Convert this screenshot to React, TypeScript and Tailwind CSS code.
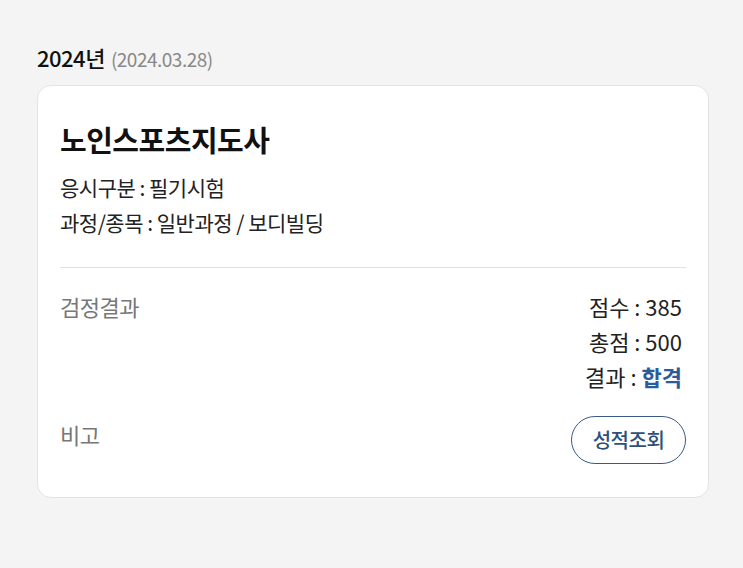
export default function App() {
  return (
    <div
      className="min-h-[568px] w-full bg-[#f4f4f4] px-[37px] pt-[42px]"
      style={{ fontFamily: '"Noto Sans CJK KR", "Noto Sans", sans-serif' }}
    >
      <div className="flex h-[30px] items-baseline gap-[6px] tracking-[-0.5px]">
        <span className="text-[22px] font-medium leading-[30px] text-[#111]">2024년</span>
        <span className="text-[19px] leading-[30px] text-[#888]">(2024.03.28)</span>
      </div>

      <div className="mt-[13px] w-[672px] rounded-[14px] border border-[#e3e3e3] bg-white px-[22px] pt-[33px] pb-[33px]">
        <h2 className="text-[29px] font-bold leading-[40px] text-[#111] tracking-[-0.5px]">노인스포츠지도사</h2>
        <p className="mt-[14px] text-[21px] leading-[28px] text-[#222] tracking-[-0.5px]">응시구분 : 필기시험</p>
        <p className="mt-[7px] text-[21px] leading-[28px] text-[#222] tracking-[-0.5px]">과정/종목 : 일반과정 / 보디빌딩</p>

        <div className="mt-[31px] border-t border-[#e2e2e2]" />

        <div className="mt-[24px] flex justify-between">
          <span className="text-[22px] leading-[28px] text-[#777] tracking-[-0.5px]">검정결과</span>
          <div className="flex flex-col items-end gap-[7px] pr-[4px] text-[22px] leading-[28px] text-[#222]">
            <span>점수 : 385</span>
            <span>총점 : 500</span>
            <span>
              결과 : <span className="font-bold text-[#2a5c9c]">합격</span>
            </span>
          </div>
        </div>

        <div className="mt-[26px] flex items-start justify-between tracking-[-0.5px]">
          <span className="mt-[4px] text-[22px] leading-[28px] text-[#777]">비고</span>
          <button className="h-[48px] w-[115px] rounded-full border-[1.5px] border-[#3a5a85] text-[20px] font-medium text-[#2d4f7c]">
            성적조회
          </button>
        </div>
      </div>
    </div>
  );
}
